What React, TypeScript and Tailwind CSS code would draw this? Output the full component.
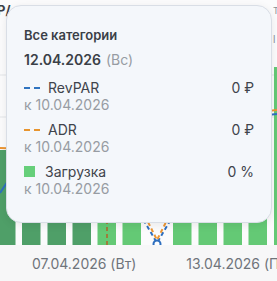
import React from "react";

const bars = [
  { x: -3, top: 150, dark: true },
  { x: 22, top: 140, dark: true },
  { x: 47.5, top: 130, dark: true },
  { x: 72.5, top: 120, dark: true },
  { x: 97.5, top: 110, dark: false },
  { x: 122.5, top: 100, dark: false },
  { x: 173, top: 95, dark: false },
  { x: 198.5, top: 85, dark: false },
  { x: 223.5, top: 80, dark: false },
  { x: 248.5, top: 72, dark: false },
  { x: 274, top: 67, dark: false },
];

function Chart() {
  return (
    <svg width="277" height="245" viewBox="0 0 277 245" className="block">
      <rect x="0" y="0" width="277" height="245" fill="#fbfbfc" />
      <line x1="0" y1="75" x2="277" y2="75" stroke="#e3e5e8" strokeWidth="1" />
      <line x1="0" y1="117" x2="277" y2="117" stroke="#e3e5e8" strokeWidth="1" />
      <text x="-3" y="15" fontSize="13" fontWeight="700" fill="#3b3f46" fontFamily="Inter, sans-serif">Р/</text>
      <text x="273" y="14" fontSize="9" fill="#8a8f96" fontFamily="Inter, sans-serif">Т</text>
      <text x="273" y="43" fontSize="10" fill="#8a8f96" fontFamily="Inter, sans-serif">l</text>
      {bars.map((b, i) => (
        <rect
          key={i}
          x={b.x}
          y={b.top}
          width="18.5"
          height={245 - b.top}
          fill={b.dark ? "#4f9f68" : "#64c975"}
        />
      ))}
      <line x1="107" y1="150" x2="107" y2="245" stroke="#b0642a" strokeWidth="1.5" strokeDasharray="4 3" />
      <polyline points="0,148 60,150 120,130 200,118 277,110" fill="none" stroke="#eb9533" strokeWidth="2" />
      <polyline points="0,193 8,181 60,160 140,135 220,120 277,114" fill="none" stroke="#2f6fbf" strokeWidth="2" />
      <polyline points="140,214 157,243 174,214" fill="none" stroke="#2f6fbf" strokeWidth="2" strokeDasharray="4 3" />
      <polyline points="145,216 157,240 169,216" fill="none" stroke="#eb9533" strokeWidth="2" strokeDasharray="4 3" />
      <circle cx="157" cy="244" r="3.5" fill="#ffffff" stroke="#2f6fbf" strokeWidth="2" />
    </svg>
  );
}

function Dashes({ color }: { color: string }) {
  return (
    <div className="flex w-[16px] items-center gap-[4px]">
      <div className={`h-[2px] w-[6px] ${color}`} />
      <div className={`h-[2px] w-[6px] ${color}`} />
    </div>
  );
}

export default function App() {
  return (
    <div className="relative h-[281px] w-[277px] overflow-hidden bg-[#f7f7f8] font-['Inter','Noto_Sans',sans-serif]">
      <div className="flex flex-col">
        <Chart />
        <div className="flex h-[36px] items-center gap-[50px] whitespace-nowrap pl-[32px] pt-[1px] text-[14px] text-[#6f747b]">
          <span>07.04.2026 (Вт)</span>
          <span>13.04.2026 (Пн)</span>
        </div>
      </div>

      <div className="absolute left-[6px] top-[5px] h-[218px] w-[266px] rounded-[15px] border border-[#d9dee6] bg-[#f4f7fb] px-[17px] pt-[19px] shadow-[0_2px_8px_rgba(0,0,0,0.08)]">
        <div className="text-[13px] font-semibold leading-[20px] text-[#3a3f47]">Все категории</div>
        <div className="mt-[5px] text-[14px] leading-[20px]">
          <span className="font-semibold text-[#3a3f47]">12.04.2026</span>
          <span className="ml-[5px] text-[#979ca3]">(Вс)</span>
        </div>

        <div className="mt-[9px] flex flex-col gap-[8px] text-[14px] leading-[17px]">
          <div>
            <div className="flex items-center justify-between">
              <div className="flex items-center">
                <Dashes color="bg-[#2f74c0]" />
                <span className="ml-[8px] text-[#3f444c]">RevPAR</span>
              </div>
              <span className="text-[#3f444c]">0 ₽</span>
            </div>
            <div className="text-[#979ca3]">к 10.04.2026</div>
          </div>
          <div>
            <div className="flex items-center justify-between">
              <div className="flex items-center">
                <Dashes color="bg-[#e8952f]" />
                <span className="ml-[8px] text-[#3f444c]">ADR</span>
              </div>
              <span className="text-[#3f444c]">0 ₽</span>
            </div>
            <div className="text-[#979ca3]">к 10.04.2026</div>
          </div>
          <div>
            <div className="flex items-center justify-between">
              <div className="flex items-center">
                <div className="h-[11px] w-[11px] bg-[#66cf7a]" />
                <span className="ml-[10px] text-[#3f444c]">Загрузка</span>
              </div>
              <span className="text-[#3f444c]">0 %</span>
            </div>
            <div className="text-[#979ca3]">к 10.04.2026</div>
          </div>
        </div>
      </div>
    </div>
  );
}
